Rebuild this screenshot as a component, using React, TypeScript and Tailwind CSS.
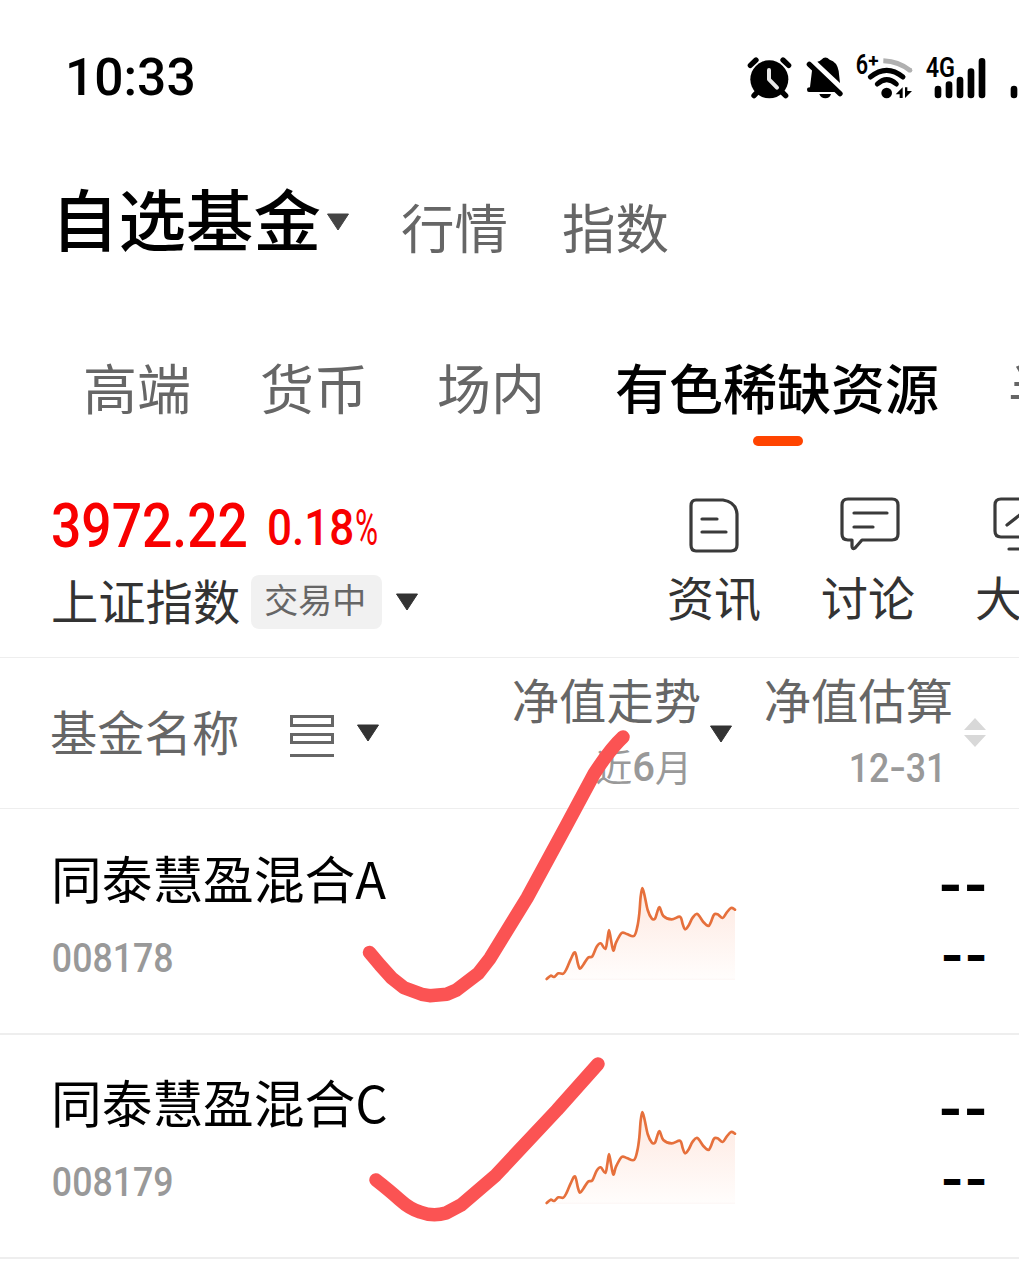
import React from 'react';

const tabs = ['高端', '货币', '场内', '有色稀缺资源', '半导体'];
const activeTab = '有色稀缺资源';

const funds = [
  { name: '同泰慧盈混合A', code: '008178' },
  { name: '同泰慧盈混合C', code: '008179' },
];

const trend = [
  [590, 477], [602, 467], [612, 471], [625, 460], [640, 461], [650, 446], [662, 418], [675, 397],
  [684, 432], [690, 446], [700, 434], [714, 413], [727, 409], [740, 380], [752, 370], [766, 387],
  [772, 360], [777, 330], [783, 360], [790, 392], [798, 368], [815, 339], [830, 342], [852, 348],
  [862, 320], [868, 280], [872, 230], [877, 204], [884, 228], [893, 270], [905, 295], [915, 296],
  [922, 275], [929, 262], [940, 288], [965, 298], [990, 290], [998, 312], [1005, 328], [1015, 318],
  [1028, 293], [1042, 282], [1060, 306], [1075, 318], [1082, 308], [1092, 284], [1103, 283],
  [1118, 294], [1130, 278], [1143, 264], [1155, 269],
];

// Catmull-Rom spline through the points, written as cubic segments
const smoothPath = (pts: number[][]) =>
  pts.slice(1).reduce((d, p, i) => {
    const p0 = pts[Math.max(i - 1, 0)];
    const p1 = pts[i];
    const p3 = pts[Math.min(i + 2, pts.length - 1)];
    return `${d} C${p1[0] + (p[0] - p0[0]) / 6} ${p1[1] + (p[1] - p0[1]) / 6} ${p[0] - (p3[0] - p1[0]) / 6} ${p[1] - (p3[1] - p1[1]) / 6} ${p[0]} ${p[1]}`;
  }, `M${pts[0][0]} ${pts[0][1]}`);

const Caret: React.FC<{ className?: string }> = ({ className = 'text-[#333]' }) => (
  <svg width="24" height="18" viewBox="0 0 24 18" className={`shrink-0 ${className}`}>
    <path d="M1.5 1h21L12 17z" fill="currentColor" stroke="currentColor" strokeWidth="1" strokeLinejoin="round" />
  </svg>
);

const StatusIcons: React.FC = () => (
  <svg width="289" height="70" viewBox="0 0 867 210" className="shrink-0">
    {/* Alarm */}
    <g stroke="#000" strokeWidth="16" strokeLinecap="round" fill="none">
      <circle cx="118" cy="118" r="57" fill="#000" stroke="none" />
      <path d="M61 76l17-16M159 60l17 16M88 150l-16 17M150 150l17 17" />
      <path d="M117 90v28l24 25" stroke="#e8e8e8" strokeWidth="12" strokeLinejoin="round" />
    </g>
    {/* Muted bell */}
    <path d="M247 84l72 72h-82q-6 0-6-7t9-7z" />
    <path d="M262 65q8-1 12-6q12-13 25 0q22 6 27 34l4 36z" />
    <path d="M238 73l92 88" stroke="#000" strokeWidth="16" strokeLinecap="round" />
    <path d="M268 162h35q-4 13-17 13t-18-13z" />
    {/* Wifi */}
    <g fill="none" strokeWidth="15">
      <path d="M460 62q48 2 81 30" stroke="#b0b0b0" />
      <circle cx="540" cy="91" r="7" fill="#b0b0b0" stroke="none" />
      <path d="M421 111q49-40 98 0M442 132q28-26 57 0" stroke="#000" strokeLinecap="round" />
      <circle cx="470" cy="159" r="16" fill="#000" stroke="none" />
    </g>
    <path d="M497 163l21-21v32h-9v-11zM525 142h7v11h14l-21 21z" />
    <text x="377" y="102" fontFamily="Roboto" fontWeight="600" fontSize="81" textLength="37" lengthAdjust="spacingAndGlyphs">6</text>
    <text x="415" y="80" fontFamily="Roboto" fontWeight="700" fontSize="54" textLength="31" lengthAdjust="spacingAndGlyphs">+</text>
    {/* Signal */}
    <text x="587" y="112" fontFamily="Roboto" fontWeight="600" fontSize="81" textLength="88" lengthAdjust="spacingAndGlyphs">4G</text>
    <g stroke="#000" strokeWidth="20" strokeLinecap="round">
      <path d="M624 147v18M657 134v31M690 120v45M723 95v70M756 64v101M852 147v18" />
    </g>
  </svg>
);

const Sparkline: React.FC = () => {
  const line = smoothPath(trend);
  return (
    <svg width="192" height="97" viewBox="585 195 576 291" className="shrink-0">
      <defs>
        <linearGradient id="trend-fill" x1="0" y1="0" x2="0" y2="1">
          <stop offset="0" stopColor="#fee8e0" />
          <stop offset="1" stopColor="#fffdfc" />
        </linearGradient>
      </defs>
      <path d={`${line} V478 H590 Z`} fill="url(#trend-fill)" />
      <path d="M590 478h565" stroke="#faf3f0" strokeWidth="2" />
      <path d={line} fill="none" stroke="#e6703c" strokeWidth="8" strokeLinejoin="round" strokeLinecap="round" />
    </svg>
  );
};

const App: React.FC = () => {
  return (
    <div className="relative h-[1271px] w-[1019px] overflow-hidden bg-white font-['Noto_Sans_CJK_SC',sans-serif] whitespace-nowrap text-black">
      {/* Status bar */}
      <div className="flex h-[150px] justify-between pt-10">
        <span className="pl-[65px] font-['Roboto',sans-serif] text-[51.5px] leading-[75px] font-medium">10:33</span>
        <StatusIcons />
      </div>

      {/* Main navigation */}
      <div className="flex h-[150px] pl-[51px] text-[53.5px] text-[#666]">
        <h1 className="text-[67.5px] leading-[133px] font-medium text-black">自选基金</h1>
        <div className="pt-[63px] pl-[5px]">
          <Caret className="text-[#444]" />
        </div>
        <span className="ml-[51px] leading-[152px]">行情</span>
        <span className="ml-[54px] leading-[152px]">指数</span>
      </div>

      {/* Group tabs */}
      <div className="flex h-[178px] gap-[69px] pt-[46px] pl-[83px] text-[54px] text-[#666]">
        {tabs.map((tab) => (
          <div key={tab} className="flex shrink-0 flex-col items-center">
            <span className={tab === activeTab ? 'pl-px leading-[81px] font-medium text-black' : 'leading-[81px]'}>{tab}</span>
            {tab === activeTab && <div className="mt-[9px] ml-0.5 h-[10px] w-[50px] rounded-full bg-[#ff4400]" />}
          </div>
        ))}
      </div>

      {/* Market index */}
      <div className="flex h-[180px] border-b border-[#eee] pt-[18px] pl-[51px] text-[#333]">
        <div className="w-[616px] shrink-0">
          <div className="flex h-[66px] font-['Roboto',sans-serif] text-[#f80000]">
            <div className="w-[216px]">
              <span className="inline-block origin-left scale-x-[0.875] text-[61px] leading-[61px] font-medium">3972.22</span>
            </div>
            <div className="w-[88px]">
              <span className="inline-block origin-left scale-x-[0.88] text-[50px] leading-[65px] font-medium">0.18</span>
            </div>
            <div className="w-[24px]">
              <span className="inline-block origin-left scale-x-[0.63] text-[50px] leading-[65px]">%</span>
            </div>
          </div>
          <div className="flex items-center pt-[13px]">
            <span className="-mt-1 text-[47.3px] leading-[50px]">上证指数</span>
            <span className="ml-[11px] h-[54px] w-[131px] rounded-lg bg-[#f1f1f1] pl-[13px] text-[34px] leading-[47px] text-[#666]">交易中</span>
            <Caret className="ml-[13px] text-[#333]" />
          </div>
        </div>
        <div className="flex gap-[60px] text-[47px] leading-[60px]">
          <div className="flex w-[94px] shrink-0 flex-col items-center">
            <svg width="54" height="58" viewBox="0 0 54 58" fill="none" stroke="#3a3a3a" strokeWidth="3.2" strokeLinecap="round" className="mb-3 ml-0.5">
              <path d="M8 4h27q13 2 14 14v31q0 6-6 6H8q-5 0-5-6V10q0-6 5-6z" />
              <path d="M14 23h15M14 36h24" />
            </svg>
            资讯
          </div>
          <div className="flex w-[94px] shrink-0 flex-col items-center">
            <svg width="64" height="58" viewBox="0 0 64 58" fill="none" stroke="#3a3a3a" strokeWidth="3.2" strokeLinecap="round" strokeLinejoin="round" className="mb-3 ml-1.5">
              <path d="M9 3h44q6 0 6 6v29q0 6-6 6H23l-7 8q-3 2-3-2v-6H9q-6 0-6-6V9q0-6 6-6z" />
              <path d="M15 17h33M15 31h19" />
            </svg>
            讨论
          </div>
          <div className="flex w-[94px] shrink-0 flex-col items-center">
            <svg width="60" height="58" viewBox="0 0 60 58" fill="none" stroke="#3a3a3a" strokeWidth="3.2" strokeLinecap="round" className="mb-3">
              <path d="M9 3h42q6 0 6 6v26q0 6-6 6H9q-6 0-6-6V9q0-6 6-6zM15 29l14-11 8 6 12-10M17 53h26" />
            </svg>
            大盘
          </div>
        </div>
      </div>

      {/* Table header */}
      <div className="flex h-[151px] border-b border-[#eee] text-[47.3px] text-[#666]">
        <div className="flex w-[511px] items-center pl-[50px]">
          <span className="-mt-1 leading-[146px]">基金名称</span>
          <svg width="44" height="44" viewBox="0 0 44 44" fill="none" stroke="#666" strokeWidth="3" className="mt-1.5 ml-[51px]">
            <path d="M1.5 2.5h41v9h-41zM1.5 20.500h41v8h-41zM0 41.500h44" />
          </svg>
          <Caret className="ml-[22px] text-[#333]" />
        </div>
        <div className="flex w-[253px]">
          <div className="flex w-[190px] flex-col items-end pt-[11px]">
            <span className="leading-[60px]">净值走势</span>
            <span className="flex pt-3 pr-[9px] text-[37px] leading-[50px] text-[#999]">
              近<span className="pt-0.5 font-['Roboto',sans-serif] text-[40px] font-medium">6</span>月
            </span>
          </div>
          <Caret className="mt-[67px] ml-2 text-[#333]" />
        </div>
        <div className="flex">
          <div className="flex w-[189px] flex-col items-end pt-[11px]">
            <span className="leading-[60px]">净值估算</span>
            <span className="origin-right scale-x-[0.87] pt-[14px] pr-2 font-['Roboto',sans-serif] text-[41px] leading-[50px] font-medium text-[#999]">
              12<span className="inline-block w-[19px] origin-left scale-x-[1.35]">-</span>31
            </span>
          </div>
          <svg width="22" height="30" viewBox="0 0 22 30" fill="#d8d8d8" className="mt-[60px] ml-[11px]">
            <path d="M11 0l11 12H0zM0 17h22L11 29z" />
          </svg>
        </div>
      </div>

      {/* Funds */}
      <div className="pt-0.5">
        {funds.map((fund) => (
          <div key={fund.code} className="flex h-[224px] border-b-2 border-[#eee] pl-[51px]">
            <div className="w-[494px] pt-[33px]">
              <div className="text-[50.7px] leading-[66px]">{fund.name}</div>
              <div className="w-fit origin-left scale-x-[0.87] pt-[23px] pl-px font-['Roboto',sans-serif] text-[41px] leading-[50px] font-medium text-[#999]">{fund.code}</div>
            </div>
            <div className="pt-[74px]">
              <Sparkline />
            </div>
            <div className="flex w-[252px] origin-right scale-x-[1.27] flex-col items-end pt-[40px] font-['DejaVu_Sans',sans-serif] text-[44px] leading-[70px] font-bold tracking-[1.500px]">
              <span>--</span>
              <span className="text-[42px]">--</span>
            </div>
          </div>
        ))}
      </div>

      {/* Marker strokes */}
      <svg width="1019" height="1271" viewBox="0 0 1019 1271" fill="none" stroke="#fb5353" strokeWidth="13.5" strokeLinecap="round" strokeLinejoin="round" className="pointer-events-none absolute inset-0">
        <path d="M369.500 952.500L380 965l11.700 13 12.300 9.700 17.700 6.600 8 1.400 17-1.400 9.300-4 22.300-17 11.700-15L527 898l38-70 29-54q16-25 29-37" />
        <path d="M376 1180q14 11 24 20 10 9 20 12 13 5 26 1l15-8 35-30 61-65 41-46" />
      </svg>
    </div>
  );
};

export default App;
